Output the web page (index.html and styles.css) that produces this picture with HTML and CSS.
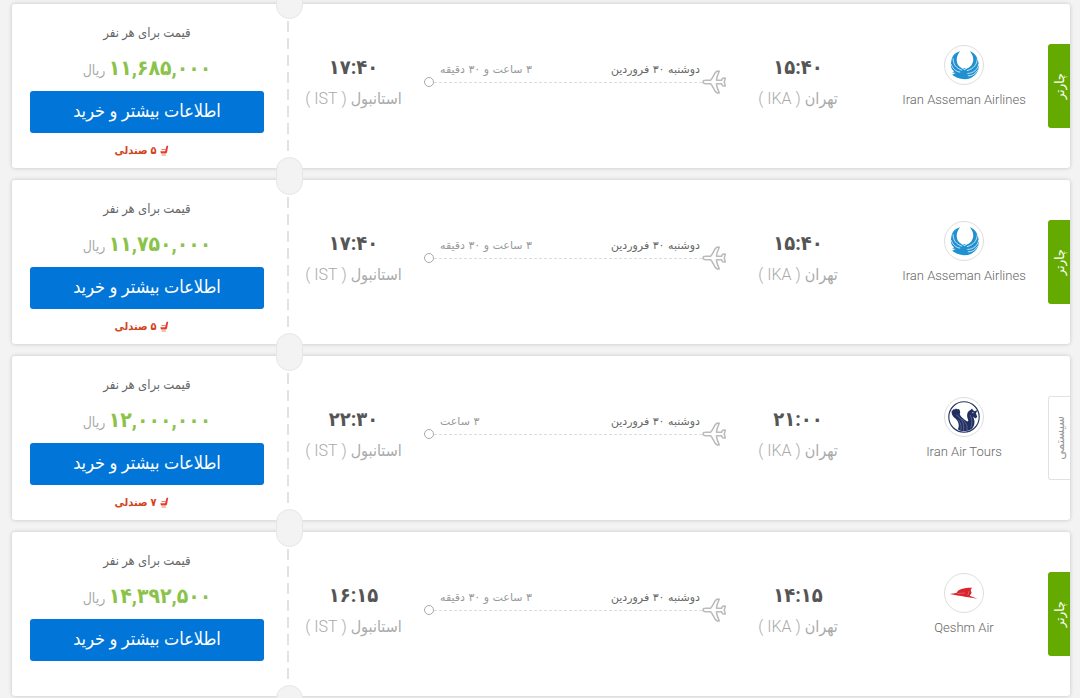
FILE: index.html
```html
<!DOCTYPE html>
<html lang="fa" dir="rtl">

<head>
    <meta charset="UTF-8">
    <meta name="viewport" content="width=device-width, initial-scale=1.0">
    <title>پرواز تهران به استانبول</title>
    <link rel="stylesheet" href="styles.css">
</head>

<body>
    <!-- shared icons -->
    <svg class="sprite" aria-hidden="true">
        <symbol id="plane" viewBox="0 0 24 24">
            <path d="M1 12 C1 11 2.500 10.300 4 10.300 L8.500 10.300 C11 8.500 12 3 14.500 1.500 Q16 .800 17.300 1.200 C16 4 14.500 7 14.500 10.300 L19.500 10.300 L20.500 8.300 L23.300 8 L22.300 12 L23.300 16 L20.500 15.700 L19.500 13.700 L14.500 13.700 C14.500 17 16 20 17.300 22.800 Q16 23.200 14.500 22.500 C12 21 11 15.500 8.500 13.700 L4 13.700 C2.500 13.700 1 13 1 12 Z"
                fill="#fff" stroke="#bbb" stroke-width="1.500" stroke-linejoin="round" />
        </symbol>
        <symbol id="seat" viewBox="0 0 10 11">
            <path d="M7.500 1 L9.300 .500 L8 7.500 Q7.800 8.500 6.500 8.500 L2 8.500 L1.300 6.300 L6 6.300 Z" fill="#e0402a" />
            <path d="M2.500 4.500 L6.500 4.500" stroke="#e98374" stroke-width="1.200" />
            <path d="M2.500 10 L7 10" stroke="#e98374" />
        </symbol>
        <symbol id="asseman" viewBox="0 0 40 40">
            <path d="M16 5.500 C10 7 7 11 6.500 17 C5.500 21 6.500 24 9.500 26.500 L6.500 29 C10 33 15 35 21 35 C29 34.500 35 29 35.500 22 C36 14 32 7 26 5.500 C31 11 31 18 26 22 C24 23.500 19 23.800 16.500 22.500 C11 19 11 11 16 5.500 Z"
                fill="#1f90d0" />
            <g fill="none" stroke="#fff" stroke-width=".800">
                <path d="M8.500 13 C8.500 19 11.500 23.500 18 25.500" />
                <path d="M6.500 19 C8 24 11.500 27 16 27.500" />
                <path d="M34 13 C34 19 30.500 24 23 26" />
                <path d="M35.500 19 C34.500 25 30 28.500 23.500 29" />
                <path d="M34.500 25.500 C32 29.500 28.500 31.500 24 31.500" />
            </g>
            <path d="M17 22.500 L20.500 24.800 L26 21.500" fill="none" stroke="#fff" />
            <path d="M4 27 L11 28.500 L7 30.500" fill="#fff" />
        </symbol>
        <symbol id="airtour" viewBox="0 0 40 40">
            <circle cx="20" cy="20" r="16" fill="#fff" stroke="#273563" stroke-width="1.200" />
            <path d="M7 16 L7 13.500 L8.500 13 L9 11.500 L10.500 12 L11.500 11 L13 11.800 L14.500 11.500 L15.500 13 L16 15 L15.500 17 C16.500 20 20 22 23 24.500 C24.500 25 25 24 24 22 C22.500 18 23.500 14 26.500 13 L28.500 11 L29.500 13 L31 14 L34.500 12.500 L32.500 16 L34 20 L32 21.500 L29.500 19.500 C32 24 31.500 30 27.500 33 C22 36 16 35.500 13.500 33 C15.500 29 14.500 25 11 21.500 C9 20 7.500 18.500 7 16 Z"
                fill="#202e60" />
            <path d="M12 18 C18 22 20.500 27 19.500 34.500 M14 23 C17 27 17.500 31 16.500 34 M18 22 C22 26 24 29 23 34 M26.500 18 C28.500 22 29 27 27 31"
                fill="none" stroke="#7a86ad" stroke-width=".700" />
            <path d="M28.500 15.500 L30 15.500" stroke="#fff" stroke-width=".800" />
        </symbol>
        <symbol id="qeshm" viewBox="0 0 40 40">
            <path d="M5 21 L12 20 C14 16 19 14.500 28.500 14.500 L27 16.500 L28 20 L26 22.800 L34 26 C27 24.800 16 23 5 21 Z" fill="#d9232e" />
            <path d="M13 20.500 L21 20 M24 22.500 L25.500 18" fill="none" stroke="#f3a5a8" stroke-width=".500" />
        </symbol>
    </svg>

    <main class="flights">
        <article class="card">
            <div class="type charter"><span>چارتر</span></div>
            <div class="airline">
                <svg class="logo"><use href="#asseman" /></svg>
                <span class="airline-name">Iran Asseman Airlines</span>
            </div>
            <div class="place departure">
                <strong class="time">۱۵:۴۰</strong>
                <span class="city">تهران ( IKA )</span>
            </div>
            <div class="route">
                <div class="route-info">
                    <span class="date">دوشنبه ۳۰ فروردین</span>
                    <span class="duration">۳ ساعت و ۳۰ دقیقه</span>
                </div>
                <div class="route-line">
                    <svg class="plane"><use href="#plane" /></svg>
                    <span class="dots"></span>
                    <span class="stop"></span>
                </div>
            </div>
            <div class="place arrival">
                <strong class="time">۱۷:۴۰</strong>
                <span class="city">استانبول ( IST )</span>
            </div>
            <div class="price-box">
                <span class="price-label">قیمت برای هر نفر</span>
                <div class="price"><strong>۱۱,۶۸۵,۰۰۰</strong> <span>ریال</span></div>
                <button type="button" class="buy-button">اطلاعات بیشتر و خرید</button>
                <div class="seats"><svg class="seat"><use href="#seat" /></svg><span>۵ صندلی</span></div>
            </div>
        </article>

        <article class="card">
            <div class="type charter"><span>چارتر</span></div>
            <div class="airline">
                <svg class="logo"><use href="#asseman" /></svg>
                <span class="airline-name">Iran Asseman Airlines</span>
            </div>
            <div class="place departure">
                <strong class="time">۱۵:۴۰</strong>
                <span class="city">تهران ( IKA )</span>
            </div>
            <div class="route">
                <div class="route-info">
                    <span class="date">دوشنبه ۳۰ فروردین</span>
                    <span class="duration">۳ ساعت و ۳۰ دقیقه</span>
                </div>
                <div class="route-line">
                    <svg class="plane"><use href="#plane" /></svg>
                    <span class="dots"></span>
                    <span class="stop"></span>
                </div>
            </div>
            <div class="place arrival">
                <strong class="time">۱۷:۴۰</strong>
                <span class="city">استانبول ( IST )</span>
            </div>
            <div class="price-box">
                <span class="price-label">قیمت برای هر نفر</span>
                <div class="price"><strong>۱۱,۷۵۰,۰۰۰</strong> <span>ریال</span></div>
                <button type="button" class="buy-button">اطلاعات بیشتر و خرید</button>
                <div class="seats"><svg class="seat"><use href="#seat" /></svg><span>۵ صندلی</span></div>
            </div>
        </article>

        <article class="card">
            <div class="type system"><span>سیستمی</span></div>
            <div class="airline">
                <svg class="logo"><use href="#airtour" /></svg>
                <span class="airline-name">Iran Air Tours</span>
            </div>
            <div class="place departure">
                <strong class="time">۲۱:۰۰</strong>
                <span class="city">تهران ( IKA )</span>
            </div>
            <div class="route">
                <div class="route-info">
                    <span class="date">دوشنبه ۳۰ فروردین</span>
                    <span class="duration">۳ ساعت</span>
                </div>
                <div class="route-line">
                    <svg class="plane"><use href="#plane" /></svg>
                    <span class="dots"></span>
                    <span class="stop"></span>
                </div>
            </div>
            <div class="place arrival">
                <strong class="time">۲۲:۳۰</strong>
                <span class="city">استانبول ( IST )</span>
            </div>
            <div class="price-box">
                <span class="price-label">قیمت برای هر نفر</span>
                <div class="price"><strong>۱۲,۰۰۰,۰۰۰</strong> <span>ریال</span></div>
                <button type="button" class="buy-button">اطلاعات بیشتر و خرید</button>
                <div class="seats"><svg class="seat"><use href="#seat" /></svg><span>۷ صندلی</span></div>
            </div>
        </article>

        <article class="card">
            <div class="type charter"><span>چارتر</span></div>
            <div class="airline">
                <svg class="logo"><use href="#qeshm" /></svg>
                <span class="airline-name">Qeshm Air</span>
            </div>
            <div class="place departure">
                <strong class="time">۱۴:۱۵</strong>
                <span class="city">تهران ( IKA )</span>
            </div>
            <div class="route">
                <div class="route-info">
                    <span class="date">دوشنبه ۳۰ فروردین</span>
                    <span class="duration">۳ ساعت و ۳۰ دقیقه</span>
                </div>
                <div class="route-line">
                    <svg class="plane"><use href="#plane" /></svg>
                    <span class="dots"></span>
                    <span class="stop"></span>
                </div>
            </div>
            <div class="place arrival">
                <strong class="time">۱۶:۱۵</strong>
                <span class="city">استانبول ( IST )</span>
            </div>
            <div class="price-box">
                <span class="price-label">قیمت برای هر نفر</span>
                <div class="price"><strong>۱۴,۳۹۲,۵۰۰</strong> <span>ریال</span></div>
                <button type="button" class="buy-button">اطلاعات بیشتر و خرید</button>
            </div>
        </article>
    </main>
</body>

</html>
```
FILE: styles.css
```css
*,
*::before,
*::after {
    box-sizing: border-box;
}

body {
    margin: 0;
    font-family: Roboto, "DejaVu Sans Condensed", "DejaVu Sans", sans-serif;
    background-color: #f3f3f3;
    color: #666;
}

.sprite {
    position: absolute;
    width: 0;
    height: 0;
}

.flights {
    display: flex;
    flex-direction: column;
    gap: 12px;
    padding: 4px 10px 2px 12px;
    overflow: hidden;
}

.card {
    position: relative;
    display: flex;
    align-items: flex-start;
    min-height: 164px;
    background-color: #fff;
    border-radius: 3px;
    box-shadow: 0 0 4px rgba(0, 0, 0, 0.2);
}

/* ticket notches between the cards */
.card::before,
.card:last-child::after {
    content: "";
    position: absolute;
    z-index: 1;
    top: -23px;
    left: 264px;
    width: 27px;
    height: 38px;
    background-color: #f3f3f3;
    border: 1px solid #e6e6e6;
    border-radius: 14px;
}

.card:last-child::after {
    top: auto;
    bottom: -27px;
}

.type {
    display: flex;
    align-items: center;
    justify-content: center;
    width: 22px;
    height: 84px;
    margin-top: 40px;
    border-radius: 3px 0 0 3px;
    font-size: 13px;
}

.type span {
    writing-mode: vertical-rl;
    transform: rotate(180deg);
}

.charter {
    background-color: #65aa00;
    color: #fff;
}

.system {
    border: 1px solid #e2e2e2;
    border-right: none;
    color: #999;
}

.airline {
    display: flex;
    flex-direction: column;
    align-items: center;
    width: 168px;
    padding-top: 41px;
}

.logo {
    width: 40px;
    height: 40px;
    border: 1px solid #dedede;
    border-radius: 50%;
}

.airline-name {
    font-size: 13px;
    font-weight: 300;
    line-height: 30px;
}

.place {
    display: flex;
    flex-direction: column;
    align-items: center;
    padding-top: 47px;
    white-space: nowrap;
}

.departure {
    width: 140px;
    margin-right: 12px;
}

.arrival {
    width: 129px;
}

.time {
    font-size: 20px;
    line-height: 32px;
    color: #555;
}

.city {
    font-size: 16px;
    font-weight: 300;
    line-height: 32px;
    color: #aaa;
}

.route {
    flex: 1;
    padding: 55px 2px 0 6px;
}

.route-info {
    display: flex;
    justify-content: space-between;
    padding: 0 26px 0 16px;
    font-family: "DejaVu Sans", sans-serif;
    font-size: 11px;
    line-height: 22px;
    white-space: nowrap;
}

.duration {
    color: #999;
}

.route-line {
    display: flex;
    align-items: center;
    height: 24px;
    margin-top: -11px;
}

.plane {
    width: 24px;
    height: 24px;
}

.dots {
    flex: 1;
    border-top: 1px dashed #ddd;
}

.stop {
    width: 10px;
    height: 10px;
    border: 1px solid #aaa;
    border-radius: 50%;
}

.price-box {
    position: relative;
    display: flex;
    flex-direction: column;
    width: 277px;
    padding: 17px 25px 0 18px;
    text-align: center;
}

/* dashed tear line */
.price-box::before {
    content: "";
    position: absolute;
    top: 17px;
    right: 0;
    width: 2px;
    height: 130px;
    background: repeating-linear-gradient(#e2e2e2 0 11px, #fff 11px 17px);
}

.price-label {
    font-size: 13px;
    line-height: 24px;
}

.price {
    height: 46px;
    line-height: 46px;
    font-size: 14px;
    color: #aaa;
}

.price strong {
    font-size: 21px;
    color: #8bc34a;
}

.buy-button {
    height: 42px;
    padding: 0 0 4px;
    background-color: #0275d8;
    color: #fff;
    border: none;
    border-radius: 3px;
    font-family: inherit;
    font-size: 18px;
    cursor: pointer;
}

.seats {
    display: flex;
    align-items: center;
    justify-content: center;
    gap: 3px;
    height: 35px;
    margin-right: 10px;
    font-size: 11px;
    font-weight: bold;
    color: #d3431c;
}

.seat {
    width: 10px;
    height: 11px;
}
```
